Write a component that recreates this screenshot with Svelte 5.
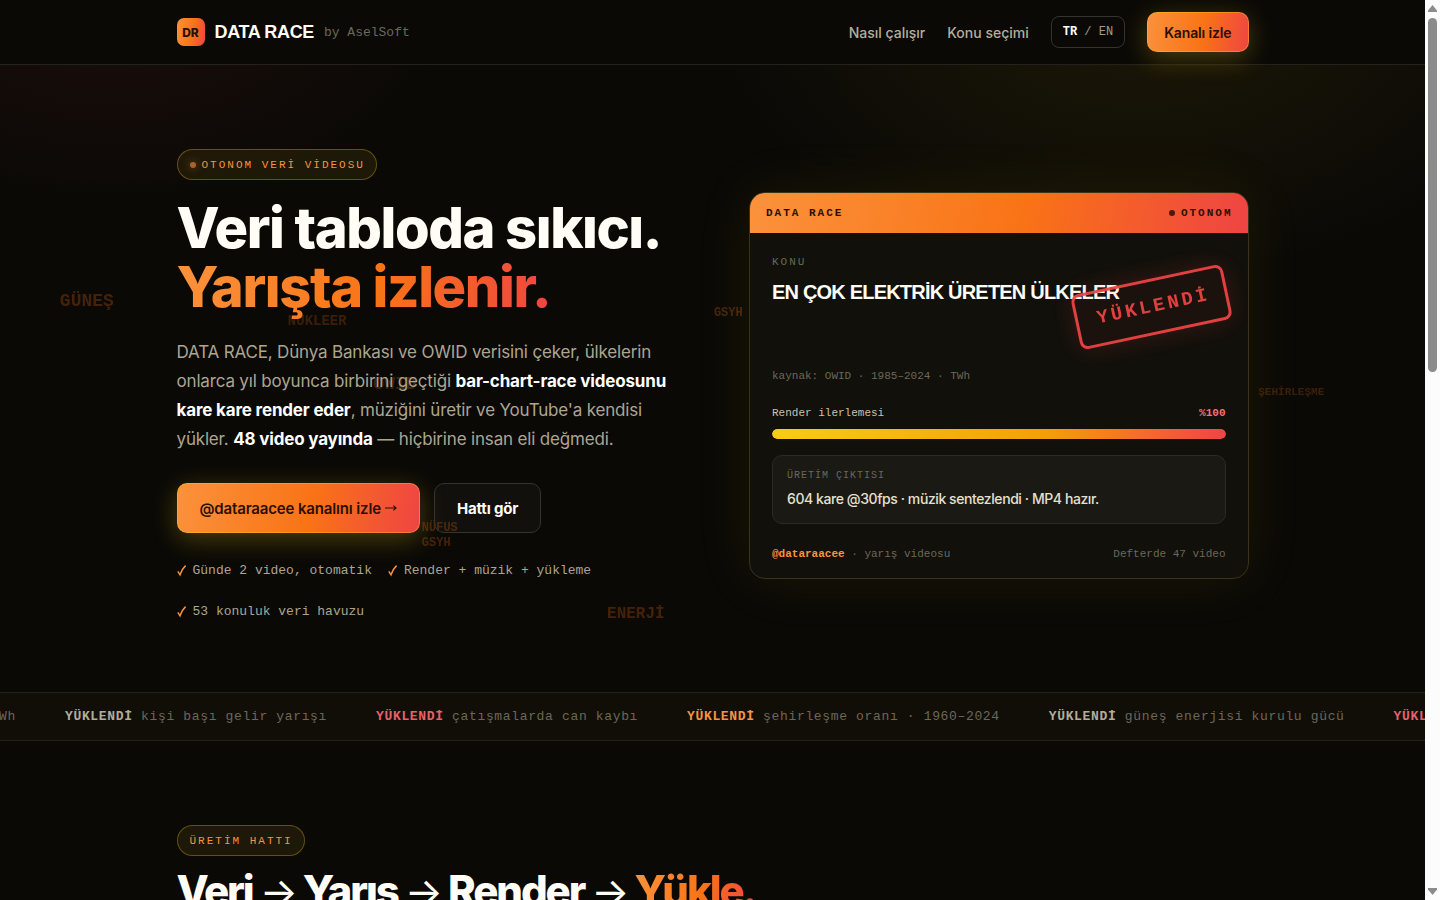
<script lang="ts">
    type Word = { text: string; x: number; y: number; size: number; alpha: number };

    // x in % of the hero width, y in px below the hero's top edge
    const words: Word[] = [
        { text: "GÜNEŞ", x: 4.2, y: 226, size: 18, alpha: 0.24 },
        { text: "NÜKLEER", x: 20.2, y: 246, size: 14, alpha: 0.2 },
        { text: "OWID", x: 26.2, y: 309, size: 18, alpha: 0.22 },
        { text: "NÜFUS", x: 29.6, y: 453, size: 12, alpha: 0.24 },
        { text: "GSYH", x: 29.6, y: 468, size: 12, alpha: 0.24 },
        { text: "ENERJİ", x: 42.6, y: 539, size: 16, alpha: 0.24 },
        { text: "GSYH", x: 50.1, y: 238, size: 12, alpha: 0.26 },
        { text: "ŞEHİRLEŞME", x: 88.3, y: 317, size: 11, alpha: 0.2 },
    ];

    const checks = [
        "Günde 2 video, otomatik",
        "Render + müzik + yükleme",
        "53 konuluk veri havuzu",
    ];

    const ticker = [
        { tone: "amber", text: "elektrik üretimi · TWh" },
        { tone: "plain", text: "kişi başı gelir yarışı" },
        { tone: "red", text: "çatışmalarda can kaybı" },
        { tone: "amber", text: "şehirleşme oranı · 1960–2024" },
        { tone: "plain", text: "güneş enerjisi kurulu gücü" },
        { tone: "red", text: "nükleer üretim · TWh" },
    ];

    let lang = $state("TR");
    let progress = $state(100);
</script>

<div class="shell">
    <div class="page">
        <header>
            <div class="container bar">
                <a class="brand" href="#top">
                    <span class="logo">DR</span>
                    <span class="name">DATA RACE</span>
                    <span class="by">by AselSoft</span>
                </a>
                <nav>
                    <a href="#hat">Nasıl çalışır</a>
                    <a href="#konu">Konu seçimi</a>
                    <button
                        class="lang"
                        onclick={() => (lang = lang === "TR" ? "EN" : "TR")}
                    >
                        <span class:on={lang === "TR"}>TR</span> /
                        <span class:on={lang === "EN"}>EN</span>
                    </button>
                    <a class="btn primary small" href="#kanal">Kanalı izle</a>
                </nav>
            </div>
        </header>

        <section class="hero" id="top">
            <div class="words" aria-hidden="true">
                {#each words as w}
                    <span
                        style={`left: ${w.x}%; top: ${w.y}px; font-size: ${w.size}px; opacity: ${w.alpha};`}
                        >{w.text}</span
                    >
                {/each}
            </div>

            <div class="container hero-grid">
                <div class="intro">
                    <span class="pill"><i class="dot"></i>OTONOM VERİ VİDEOSU</span>
                    <h1>
                        Veri tabloda sıkıcı.<br />
                        <span class="grad">Yarışta izlenir.</span>
                    </h1>
                    <p class="lead">
                        DATA RACE, Dünya Bankası ve OWID verisini çeker, ülkelerin
                        onlarca yıl boyunca birbirini geçtiği
                        <strong>bar-chart-race videosunu kare kare render eder</strong>,
                        müziğini üretir ve YouTube'a kendisi yükler.
                        <strong>48 video yayında</strong> — hiçbirine insan eli değmedi.
                    </p>
                    <div class="actions">
                        <a class="btn primary" href="#kanal">
                            @dataraacee kanalını izle
                            <svg width="12" height="8" viewBox="0 0 12 8" aria-hidden="true">
                                <path d="M0 4h11M8.400 1.600 11 4 8.400 6.400" />
                            </svg>
                        </a>
                        <a class="btn ghost" href="#hat">Hattı gör</a>
                    </div>
                    <ul class="checks">
                        {#each checks as check}
                            <li>
                                <svg width="10" height="12" viewBox="0 0 10 12" aria-hidden="true">
                                    <path d="M.8 6.4 3 9.800C4 6.400 6 3 8.600.6" />
                                </svg>
                                {check}
                            </li>
                        {/each}
                    </ul>
                </div>

                <article class="card">
                    <div class="card-head">
                        <span>DATA RACE</span>
                        <span class="live"><i></i>OTONOM</span>
                    </div>
                    <div class="card-body">
                        <div class="label">KONU</div>
                        <h2 class="topic">EN ÇOK ELEKTRİK ÜRETEN ÜLKELER</h2>
                        <div class="source">kaynak: OWID · 1985–2024 · TWh</div>
                        <div class="row">
                            <span>Render ilerlemesi</span>
                            <b>%{progress}</b>
                        </div>
                        <div class="track">
                            <div class="fill" style={`width: ${progress}%;`}></div>
                        </div>
                        <div class="output">
                            <div class="label small-label">ÜRETİM ÇIKTISI</div>
                            <div class="result">604 kare @30fps · müzik sentezlendi · MP4 hazır.</div>
                        </div>
                        <div class="card-foot">
                            <span><b>@dataraacee</b> · yarış videosu</span>
                            <span>Defterde 47 video</span>
                        </div>
                        <div class="stamp">YÜKLENDİ</div>
                    </div>
                </article>
            </div>
        </section>

        <div class="ticker">
            <div class="ticker-track">
                {#each ticker as item}
                    <span><b class={item.tone}>YÜKLENDİ</b> {item.text}</span>
                {/each}
            </div>
        </div>

        <section class="pipeline container" id="hat">
            <span class="pill">ÜRETİM HATTI</span>
            <h2>
                Veri <span class="arrow">→</span> Yarış <span class="arrow">→</span>
                Render <span class="arrow">→</span> <span class="grad">Yükle.</span>
            </h2>
        </section>
    </div>

    <div class="scrollbar" aria-hidden="true">
        <svg width="9" height="7" viewBox="0 0 9 7"><path d="M4.500 0 9 5.500V7H0V5.500Z" /></svg>
        <div class="rail"><div class="thumb"></div></div>
        <svg width="9" height="7" viewBox="0 0 9 7"><path d="M4.500 7 9 1.500V0H0V1.500Z" /></svg>
    </div>
</div>

<style>
    :global(body) {
        background: #0a0906;
    }

    .shell {
        --ink: #fffdf5;
        --muted: #aca590;
        --faint: #6c6857;
        --orange: #fb923c;
        --grad: linear-gradient(100deg, #fb923c 0%, #f97316 55%, #ef4444 100%);
        --sans: Inter, "Liberation Sans", sans-serif;
        --mono: "Liberation Mono", monospace;
        display: flex;
        height: 100vh;
        overflow: hidden;
        color: var(--ink);
        font-family: var(--sans);
    }

    .page {
        flex: 1;
        min-width: 0;
        overflow: hidden;
        background:
            radial-gradient(620px 400px at 80% 0%, rgba(250, 204, 21, 0.08), transparent 70%),
            radial-gradient(500px 300px at 8% 0%, rgba(239, 68, 68, 0.08), transparent 70%),
            #0a0906;
    }

    .container {
        box-sizing: border-box;
        width: 100%;
        max-width: 1120px;
        margin: 0 auto;
        padding: 0 24px;
    }

    a {
        color: inherit;
        text-decoration: none;
    }

    header {
        background: #0a0906;
        border-bottom: 1px solid #24221c;
    }

    .bar {
        display: flex;
        align-items: center;
        justify-content: space-between;
        height: 64px;
    }

    .brand,
    nav {
        display: flex;
        align-items: center;
    }

    .brand {
        gap: 10px;
    }

    .logo {
        display: grid;
        place-items: center;
        width: 28px;
        height: 28px;
        border-radius: 7px;
        background: var(--grad);
        color: #2a1004;
        font-size: 12px;
        font-weight: 800;
    }

    .name {
        font-family: "Liberation Sans", Arial, sans-serif;
        font-size: 18px;
        font-weight: 700;
        letter-spacing: -0.02em;
    }

    .by {
        color: var(--faint);
        font-family: var(--mono);
        font-size: 13px;
    }

    nav {
        gap: 22px;
        color: #b5ad98;
        font-size: 14px;
        font-weight: 500;
    }

    .lang {
        height: 32px;
        padding: 0 11px;
        border: 1px solid #35332c;
        border-radius: 8px;
        background: transparent;
        color: #a39c88;
        font-family: var(--mono);
        font-size: 12px;
    }

    .lang .on {
        color: #fff;
        font-weight: 700;
    }

    .btn {
        display: inline-flex;
        align-items: center;
        gap: 4px;
        box-sizing: border-box;
        height: 50px;
        padding: 0 22px;
        border: 1px solid #35332c;
        border-radius: 10px;
        font-size: 15px;
        font-weight: 700;
        letter-spacing: -0.01em;
    }

    .btn svg {
        fill: none;
        stroke: currentColor;
        stroke-width: 1.2;
    }

    .primary {
        border-color: rgba(250, 204, 21, 0.4);
        background: var(--grad) border-box;
        color: #2a1004;
        font-weight: 600;
        box-shadow: 0 6px 26px rgba(250, 204, 21, 0.28);
    }

    .ghost {
        background: rgba(255, 255, 255, 0.03);
    }

    .small {
        height: 40px;
        padding: 0 16px;
        font-size: 14px;
    }

    .hero {
        position: relative;
    }

    .words span {
        position: absolute;
        color: #f97316;
        font-family: var(--mono);
        font-weight: 700;
        line-height: 20px;
    }

    .hero-grid {
        position: relative;
        display: grid;
        grid-template-columns: 1.05fr 1fr;
        gap: 48px;
        align-items: center;
        padding-top: 84px;
        padding-bottom: 70px;
    }

    .pill {
        display: inline-flex;
        align-items: center;
        box-sizing: border-box;
        height: 31px;
        padding: 0 11px 0 12px;
        border: 1px solid rgba(250, 204, 21, 0.32);
        border-radius: 16px;
        background: rgba(250, 204, 21, 0.08);
        color: var(--orange);
        font-family: var(--mono);
        font-size: 11px;
        letter-spacing: 2px;
    }

    .dot {
        width: 6px;
        height: 6px;
        margin-right: 6px;
        border-radius: 50%;
        background: #a8622c;
        box-shadow: 0 0 8px rgba(251, 146, 60, 0.5);
    }

    .intro {
        display: flex;
        flex-direction: column;
        align-items: flex-start;
    }

    h1 {
        margin: 19px 0 21px;
        font-size: 56px;
        font-weight: 800;
        line-height: 59px;
        letter-spacing: -0.025em;
        white-space: nowrap;
    }

    /* room for the cedilla, which hangs below the line box */
    .grad {
        display: inline-block;
        margin-bottom: -8px;
        padding-bottom: 8px;
        background: var(--grad);
        background-clip: text;
        color: transparent;
    }

    .lead {
        margin: 0;
        max-width: 510px;
        color: var(--muted);
        font-size: 17px;
        line-height: 29px;
        letter-spacing: -0.01em;
    }

    .lead strong {
        color: #fff;
    }

    .actions {
        display: flex;
        gap: 14px;
        margin-top: 29px;
    }

    .checks {
        display: flex;
        flex-wrap: wrap;
        gap: 21px 16px;
        margin: 28px 0 0;
        padding: 0;
        list-style: none;
        color: var(--muted);
        font-family: var(--mono);
        font-size: 13px;
        line-height: 20px;
    }

    .checks li {
        display: flex;
        align-items: center;
        gap: 6px;
    }

    .checks svg {
        fill: none;
        stroke: var(--orange);
        stroke-width: 1.5;
    }

    .card {
        border: 1px solid #39331a;
        border-radius: 16px;
        overflow: hidden;
        background: #11100b;
        box-shadow: 0 0 60px rgba(250, 204, 21, 0.08);
    }

    .card-head {
        display: flex;
        align-items: center;
        justify-content: space-between;
        height: 40px;
        padding: 0 15px 0 16px;
        background: var(--grad);
        color: #2a1004;
        font-family: var(--mono);
        font-size: 11px;
        font-weight: 700;
        letter-spacing: 2px;
    }

    .live {
        display: flex;
        align-items: center;
        gap: 6px;
    }

    .live i {
        width: 6px;
        height: 6px;
        border-radius: 50%;
        background: #4a1a08;
    }

    .card-body {
        position: relative;
        padding: 21px 22px 16px;
        color: var(--faint);
        font-family: var(--mono);
        font-size: 11px;
        line-height: 16px;
    }

    .label {
        letter-spacing: 2px;
    }

    .topic {
        min-height: 76px;
        margin: 10px 0 12px;
        color: var(--ink);
        font-family: "Liberation Sans", Arial, sans-serif;
        font-size: 20px;
        font-weight: 700;
        line-height: 24px;
        letter-spacing: -0.04em;
    }

    .row,
    .card-foot {
        display: flex;
        justify-content: space-between;
    }

    .row {
        margin-top: 21px;
        color: #c9c2ad;
    }

    .row b {
        color: #f87171;
    }

    .track {
        height: 10px;
        margin-top: 8px;
        border-radius: 5px;
        overflow: hidden;
        background: #24221c;
    }

    .fill {
        height: 100%;
        border-radius: 5px;
        background: linear-gradient(90deg, #facc15, #f59e0b 60%, #ef4444);
    }

    .output {
        margin-top: 16px;
        padding: 12px 14px 14px;
        border: 1px solid #2b2a24;
        border-radius: 10px;
        background: #1a1914;
    }

    .small-label {
        font-size: 10px;
        letter-spacing: 1px;
    }

    .result {
        margin-top: 5px;
        color: #e6e0d0;
        font-family: var(--sans);
        font-size: 14px;
        font-weight: 500;
        line-height: 20px;
        letter-spacing: -0.03em;
    }

    .card-foot {
        margin-top: 22px;
    }

    .card-foot b {
        color: var(--orange);
    }

    .stamp {
        position: absolute;
        top: 46px;
        right: 18px;
        padding: 13px 15px 13px 19px;
        border: 3px solid #ef4444;
        border-radius: 8px;
        background: rgba(239, 68, 68, 0.05);
        box-shadow: 0 0 24px rgba(239, 68, 68, 0.2);
        color: #ef4444;
        font-size: 19px;
        font-weight: 700;
        line-height: 24px;
        letter-spacing: 3px;
        opacity: 0.94;
        transform: rotate(-12deg);
    }

    .ticker {
        overflow: hidden;
        border-top: 1px solid #24221c;
        border-bottom: 1px solid #24221c;
        background: #110e08;
    }

    .ticker-track {
        display: flex;
        gap: 49px;
        margin-left: -246px;
        color: var(--faint);
        font-family: var(--mono);
        font-size: 13px;
        line-height: 47px;
        letter-spacing: 0.05em;
        white-space: nowrap;
    }

    .amber {
        color: var(--orange);
    }

    .plain {
        color: #b5ad98;
    }

    .red {
        color: #e8606a;
    }

    .pipeline {
        padding-top: 84px;
    }

    .pipeline h2 {
        margin: 10px 0 0;
        font-size: 42px;
        font-weight: 800;
        line-height: 50px;
        letter-spacing: -0.05em;
        white-space: nowrap;
    }

    .arrow {
        font-size: 40px;
        font-weight: 400;
    }

    .scrollbar {
        display: flex;
        flex-direction: column;
        align-items: center;
        box-sizing: border-box;
        width: 15px;
        padding: 5px 0;
        background: #fcfcfc;
    }

    .scrollbar svg {
        fill: #8b8b8b;
    }

    .rail {
        flex: 1;
        margin: 6px 0;
    }

    .thumb {
        width: 9px;
        height: 41%;
        border-radius: 5px;
        background: #8b8b8b;
    }
</style>
